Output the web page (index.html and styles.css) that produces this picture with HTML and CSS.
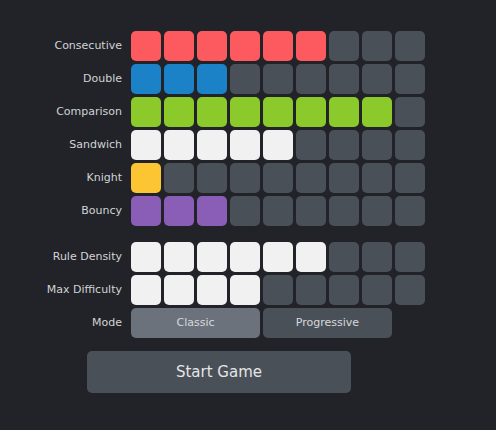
FILE: index.html
```html
<!DOCTYPE html>
<html>
<head>
<meta charset="utf-8">
<link rel="stylesheet" href="styles.css">
</head>
<body>
<div class="panel">
  <div class="grid">
    <div class="label">Consecutive</div>
    <div class="cells"><i class="c red"></i><i class="c red"></i><i class="c red"></i><i class="c red"></i><i class="c red"></i><i class="c red"></i><i class="c"></i><i class="c"></i><i class="c"></i></div>
    <div class="label">Double</div>
    <div class="cells"><i class="c blue"></i><i class="c blue"></i><i class="c blue"></i><i class="c"></i><i class="c"></i><i class="c"></i><i class="c"></i><i class="c"></i><i class="c"></i></div>
    <div class="label">Comparison</div>
    <div class="cells"><i class="c green"></i><i class="c green"></i><i class="c green"></i><i class="c green"></i><i class="c green"></i><i class="c green"></i><i class="c green"></i><i class="c green"></i><i class="c"></i></div>
    <div class="label">Sandwich</div>
    <div class="cells"><i class="c white"></i><i class="c white"></i><i class="c white"></i><i class="c white"></i><i class="c white"></i><i class="c"></i><i class="c"></i><i class="c"></i><i class="c"></i></div>
    <div class="label">Knight</div>
    <div class="cells"><i class="c yellow"></i><i class="c"></i><i class="c"></i><i class="c"></i><i class="c"></i><i class="c"></i><i class="c"></i><i class="c"></i><i class="c"></i></div>
    <div class="label">Bouncy</div>
    <div class="cells"><i class="c purple"></i><i class="c purple"></i><i class="c purple"></i><i class="c"></i><i class="c"></i><i class="c"></i><i class="c"></i><i class="c"></i><i class="c"></i></div>
    <div class="label sep">Rule Density</div>
    <div class="cells sep"><i class="c white"></i><i class="c white"></i><i class="c white"></i><i class="c white"></i><i class="c white"></i><i class="c white"></i><i class="c"></i><i class="c"></i><i class="c"></i></div>
    <div class="label">Max Difficulty</div>
    <div class="cells"><i class="c white"></i><i class="c white"></i><i class="c white"></i><i class="c white"></i><i class="c"></i><i class="c"></i><i class="c"></i><i class="c"></i><i class="c"></i></div>
    <div class="label">Mode</div>
    <div class="modes"><div class="mode active">Classic</div><div class="mode">Progressive</div></div>
  </div>
  <div class="start-wrap"><div class="start">Start Game</div></div>
</div>
</body>
</html>
```
FILE: styles.css
```css
html, body {
  margin: 0;
  padding: 0;
  background: #212328;
  width: 496px;
  height: 430px;
  overflow: hidden;
  font-family: "DejaVu Sans", "Liberation Sans", sans-serif;
}
.panel {
  padding-top: 31px;
}
.grid {
  display: grid;
  grid-template-columns: 122px auto;
  column-gap: 9px;
  row-gap: 3px;
  justify-content: start;
}
.label {
  text-align: right;
  color: #d2d3d5;
  font-size: 11px;
  line-height: 30px;
  height: 30px;
}
.cells {
  display: flex;
  gap: 3px;
}
.sep {
  margin-top: 13px;
}
.c {
  display: block;
  width: 30px;
  height: 30px;
  border-radius: 5px;
  background: #4a5058;
}
.red { background: #fc5a5f; }
.blue { background: #1c82c8; }
.green { background: #8cc92a; }
.white { background: #f1f1f1; }
.yellow { background: #fcc532; }
.purple { background: #8a5db7; }
.modes {
  display: flex;
  gap: 3px;
}
.mode {
  width: 129px;
  height: 30px;
  border-radius: 5px;
  background: #4a5058;
  color: #d8d9db;
  font-size: 11px;
  line-height: 30px;
  text-align: center;
}
.mode.active {
  background: #6b727b;
}
.start-wrap {
  padding-left: 87px;
  margin-top: 13px;
}
.start {
  width: 264px;
  height: 42px;
  border-radius: 5px;
  background: #4a5058;
  color: #e4e5e6;
  font-size: 15px;
  line-height: 43px;
  text-align: center;
}
```
